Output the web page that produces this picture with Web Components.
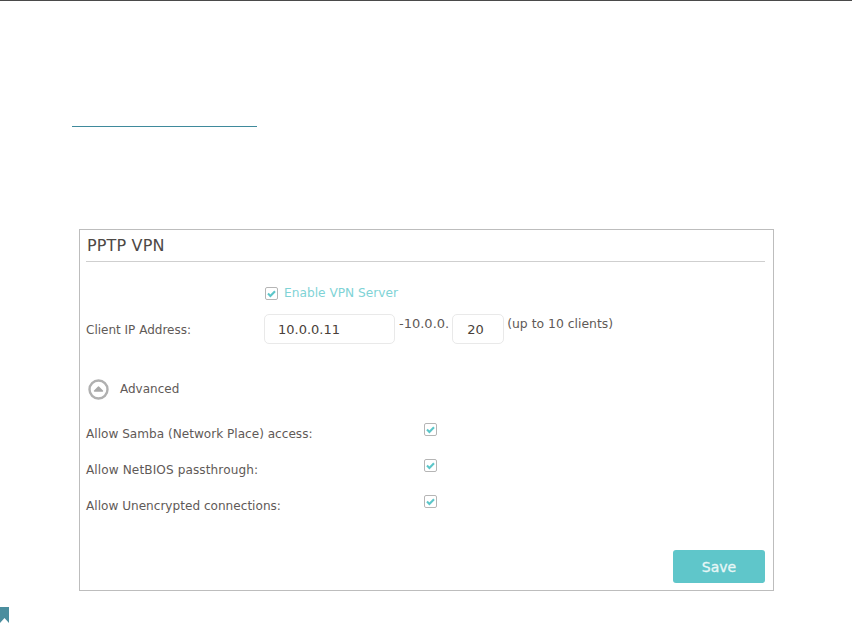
<!DOCTYPE html>
<html><head><meta charset="utf-8"><style>
html,body{margin:0;padding:0;background:#fff;overflow:hidden}
body{font-family:"DejaVu Sans",sans-serif;font-size:12px;color:#5f5a57;width:852px;height:623px}
</style></head><body>
<doc-page>
<vpn-panel slot="panel" title-text="PPTP VPN">
<check-row variant="enable" label="Enable VPN Server"></check-row>
<ip-row></ip-row>
<advanced-toggle>Advanced</advanced-toggle>
<check-row variant="opt" label="Allow Samba (Network Place) access:"></check-row>
<check-row variant="opt" spacing=".1" label="Allow NetBIOS passthrough:"></check-row>
<check-row variant="opt" label="Allow Unencrypted connections:"></check-row>
<save-button>Save</save-button>
</vpn-panel>
</doc-page>
<script>
const def=(n,html)=>customElements.define(n,class extends HTMLElement{
 connectedCallback(){ if(this.shadowRoot)return; const r=this.attachShadow({mode:'open'}); r.innerHTML=typeof html==='function'?html(this):html; }
});
const check=`<svg width="13" height="13" viewBox="0 0 13 13"><rect x=".5" y=".5" width="12" height="12" rx="1.5" fill="#fff" stroke="#b5b5b5"/><path d="M3 6.6 5.4 9 10 4.2" fill="none" stroke="#5cc6c9" stroke-width="2.1"/></svg>`;
def('doc-page',`<style>:host{display:flex;flex-direction:column;height:623px;box-sizing:border-box;border-top:1px solid #4a4a4a}
.link{margin:125px 0 0 72px;width:185px;height:1px;background:#3f8a9c;flex:none}
.p{margin:102px 0 0 79px;flex:none}
.mark{margin-top:16px;flex:none;display:block}</style>
<div class="link"></div><div class="p"><slot name="panel"></slot></div>
<svg class="mark" width="9" height="16" viewBox="0 0 9 16"><path d="M0 0H9V16L4.5 11 0 16Z" fill="#4b8e9e"/></svg>`);
def('vpn-panel',h=>`<style>:host{display:flex;flex-direction:column;box-sizing:border-box;width:695px;height:362px;border:1px solid #bdbdbd;padding:0 8px 0 6px}
h2{margin:0;font:400 16px/31px "DejaVu Sans",sans-serif;letter-spacing:.15px;text-indent:1px;color:#4d4845;border-bottom:1px solid #cfcfcf;height:31px}
.b{display:flex;flex-direction:column;flex:1}</style>
<h2>${h.getAttribute('title-text')}</h2><div class="b"><slot></slot></div>`);
def('check-row',h=>{const en=h.getAttribute('variant')==='enable';const l=h.getAttribute('label');const sp=h.getAttribute('spacing')||0;
return en?`<style>:host{display:flex;align-items:center;gap:6px;margin:24px 0 0 179px;height:14px;color:#7fd3d6;font-size:12.2px}</style>${check}<span>${l}</span>`
:`<style>:host{display:flex;height:36px;align-items:center;font-size:12.1px}
span{width:338px;position:relative;top:4px;flex:none;letter-spacing:${sp}px}svg{display:block;position:relative;top:-1px}</style><span>${l}</span>${check}`});
def('ip-row',`<style>:host{display:flex;margin-top:14px;height:30px}
.l{width:178px;flex:none;line-height:32px}
.i{box-sizing:border-box;height:30px;border:1px solid #e9e9e9;border-radius:5px;color:#4a3f3a;font-size:13px;line-height:30px;flex:none}
.t{line-height:16px;margin-top:2px}</style>
<span class="l">Client IP Address:</span><div class="i" style="width:131px;padding-left:13px">10.0.0.11</div>
<span class="t" style="margin-left:4px;margin-right:3px;font-size:13px">-10.0.0.</span><div class="i" style="width:52px;padding-left:14px">20</div>
<span class="t" style="margin-left:3px;font-size:12.4px">(up to 10 clients)</span>`);
def('advanced-toggle',`<style>:host{display:flex;align-items:center;gap:11px;margin:33px 0 11px 2px;height:24px}svg{display:block}</style>
<svg width="21" height="21" viewBox="0 0 21 21"><circle cx="10.5" cy="10.5" r="9" fill="#fff" stroke="#b0b0b0" stroke-width="2.4"/><path d="M6.5 12 10.5 8 14.5 12Z" fill="#a9a9a9" stroke="#a9a9a9" stroke-width="1.4" stroke-linejoin="round"/></svg><slot></slot>`);
def('save-button',`<style>:host{display:flex;align-items:center;justify-content:center;align-self:flex-end;width:92px;height:33px;margin-top:auto;margin-bottom:7px;background:#5fc6ca;border-radius:3px;color:#e8f7f7;font-size:14px;-webkit-text-stroke:.3px #e8f7f7}</style><slot></slot>`);
</script>
</body></html>
